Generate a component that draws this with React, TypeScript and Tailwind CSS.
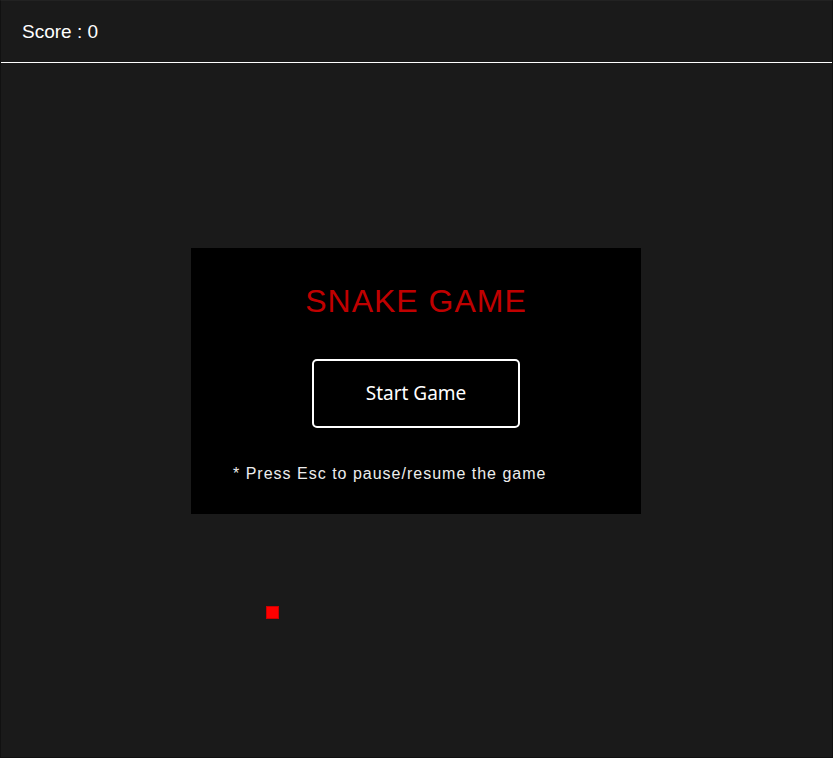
export default function App() {
  return (
    <div
      className="relative flex h-[758px] w-[833px] flex-col border border-[#111] border-t-[#222] bg-[#1a1a1a]"
      style={{ fontFamily: '"Liberation Sans", Arial, sans-serif' }}
    >
      <header className="flex h-[62px] shrink-0 items-center border-b border-white px-[21px] pt-[2px]">
        <span className="text-[19px] text-white">Score : 0</span>
      </header>

      <main className="relative flex-1">
        {/* food */}
        <div className="absolute left-[265px] top-[543px] h-[13px] w-[13px] border border-[#c00] bg-[#ff0000]" />

        <div className="absolute left-[190px] top-[185px] flex h-[266px] w-[450px] flex-col items-center bg-black">
          <h1 className="mt-[34px] text-[32px] leading-[38px] tracking-[1px] text-[#c00000]">
            SNAKE GAME
          </h1>
          <button
            className="mt-[39px] h-[69px] w-[208px] rounded-[5px] border-2 border-white text-[19px] text-white"
            style={{ fontFamily: '"Noto Sans", "Open Sans", sans-serif' }}
          >
            Start Game
          </button>
          <p className="mt-[34px] self-start pl-[42px] text-[16px] tracking-[1px] text-[#ededed]">
            * Press Esc to pause/resume the game
          </p>
        </div>
      </main>
    </div>
  );
}
